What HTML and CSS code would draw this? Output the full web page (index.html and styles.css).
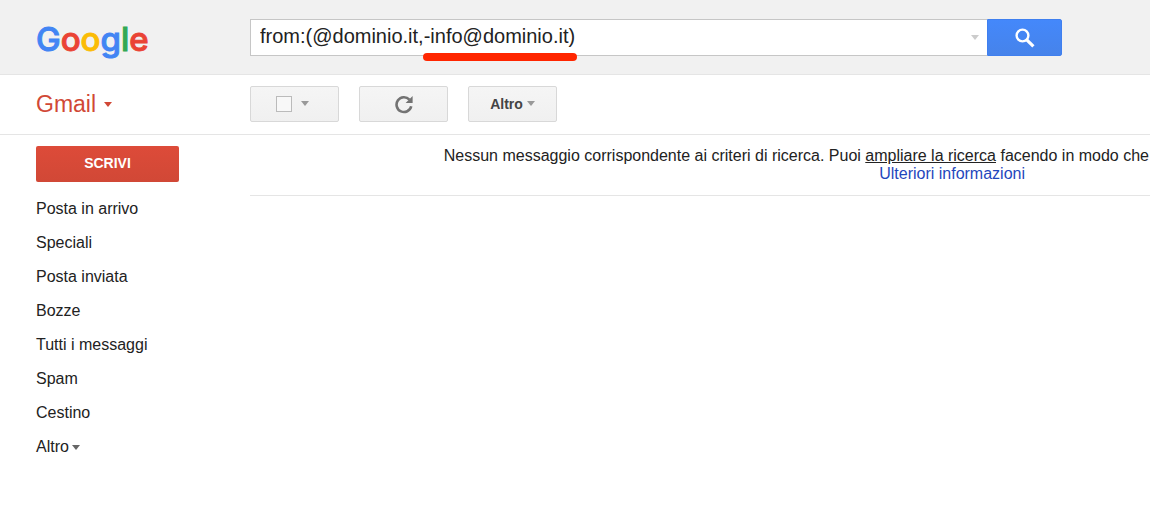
FILE: index.html
```html
<!DOCTYPE html>
<html lang="it">
<head>
    <meta charset="UTF-8">
    <meta name="viewport" content="width=device-width, initial-scale=1.0">
    <title>Gmail</title>
    <link rel="stylesheet" href="styles.css">
</head>
<body>
    <header class="top-bar">
        <a class="logo" href="#" aria-label="Google"><span class="blue">G</span><span class="red">o</span><span class="yellow">o</span><span class="blue">g</span><span class="green">l</span><span class="red">e</span></a>
        <form class="search" role="search">
            <div class="search-box">
                <input class="search-input" type="text" aria-label="Cerca" value="from:(@dominio.it,-info@dominio.it)" spellcheck="false" autocomplete="off">
                <button class="search-options" type="button" aria-label="Mostra opzioni di ricerca"><span class="caret light"></span></button>
                <span class="marker"></span>
            </div>
            <button class="search-btn" type="submit" aria-label="Cerca">
                <svg width="20" height="20" viewBox="0 0 20 20" fill="none" stroke="#fff">
                    <circle cx="7.5" cy="7.5" r="5.9" stroke-width="2.4"/>
                    <path d="M11.8 11.8L18.4 18.4" stroke-width="3.2"/>
                </svg>
            </button>
        </form>
    </header>

    <div class="toolbar">
        <button class="gmail-menu" type="button">Gmail <span class="caret red-caret"></span></button>
        <div class="tools">
            <div class="tool-btn select-btn">
                <input class="select-all" type="checkbox" aria-label="Seleziona">
                <span class="caret"></span>
            </div>
            <button class="tool-btn" type="button" aria-label="Aggiorna">
                <svg class="refresh" width="20" height="20" viewBox="0 0 20 20">
                    <path d="M15.4 5.6A7.4 7.4 0 1 0 17.2 12.2" fill="none" stroke="#737373" stroke-width="2.6"/>
                    <path d="M18.6 2V9H11.6Z" fill="#737373"/>
                </svg>
            </button>
            <button class="tool-btn" type="button">Altro <span class="caret"></span></button>
        </div>
    </div>

    <div class="content">
        <aside class="sidebar">
            <button class="compose-btn" type="button">SCRIVI</button>
            <nav class="folders">
                <a href="#">Posta in arrivo</a>
                <a href="#">Speciali</a>
                <a href="#">Posta inviata</a>
                <a href="#">Bozze</a>
                <a href="#">Tutti i messaggi</a>
                <a href="#">Spam</a>
                <a href="#">Cestino</a>
                <a href="#">Altro<span class="caret dark"></span></a>
            </nav>
        </aside>
        <main class="results">
            <p class="message">Nessun messaggio corrispondente ai criteri di ricerca. Puoi <a class="widen" href="#">ampliare la ricerca</a> facendo in modo che</p>
            <p class="message more"><a href="#">Ulteriori informazioni</a></p>
        </main>
    </div>
</body>
</html>
```

FILE: styles.css
```css
* {
    box-sizing: border-box;
}
body {
    margin: 0;
    background-color: white;
    color: #222;
    font-family: "Liberation Sans", Arial, sans-serif;
    font-size: 16px;
    line-height: 18px;
}
button {
    font-family: inherit;
    cursor: pointer;
}
a {
    color: inherit;
    text-decoration: none;
}

/* small drop-down arrow */
.caret {
    display: inline-block;
    border: 4px solid transparent;
    border-top: 5px solid #999;
    border-bottom: 0;
}
.caret.light {
    border-top-color: #ccc;
}
.caret.dark {
    border-top-color: #666;
    margin-left: 3px;
    vertical-align: 2px;
}
.caret.red-caret {
    border-top-color: #d14836;
}

/* header */
.top-bar {
    display: flex;
    align-items: center;
    height: 75px;
    padding: 0 88px 0 36px;
    background-color: #f1f1f1;
    border-bottom: 1px solid #e5e5e5;
}
.logo {
    flex: 0 0 214px;
    padding-top: 4px;
    font-family: Inter, Roboto, sans-serif;
    font-size: 33px;
    font-weight: 500;
    line-height: 40px;
    -webkit-text-stroke: 1px currentColor;
}
.blue {
    color: #4285f4;
}
.red {
    color: #ea4335;
}
.yellow {
    color: #fbbc05;
}
.green {
    color: #34a853;
}
.search {
    display: flex;
    flex: 1;
    height: 37px;
}
.search-box {
    position: relative;
    display: flex;
    flex: 1;
    background-color: white;
    border: 1px solid #c6c6c6;
    border-right: 0;
}
.search-input {
    flex: 1;
    min-width: 0;
    padding: 0 0 2px 9px;
    border: none;
    outline: none;
    background: none;
    color: #222;
    font-family: inherit;
    font-size: 20px;
}
.search-options {
    display: flex;
    align-items: center;
    padding: 0 8px;
    border: none;
    background: none;
}
.marker {
    position: absolute;
    left: 172px;
    top: 33px;
    width: 154px;
    height: 8px;
    border-radius: 4px;
    background-color: #ff2600;
}
.search-btn {
    display: flex;
    align-items: center;
    justify-content: center;
    width: 75px;
    padding: 2px 0 0;
    border: 1px solid #3f7fef;
    border-radius: 0 2px 2px 0;
    background: linear-gradient(#4488fb, #4683ea);
}

/* toolbar */
.toolbar {
    display: flex;
    align-items: center;
    height: 60px;
    padding: 0 36px;
    border-bottom: 1px solid #e5e5e5;
}
.gmail-menu {
    display: flex;
    flex: 0 0 214px;
    align-items: center;
    gap: 8px;
    padding: 0;
    border: none;
    background: none;
    color: #d14836;
    font-size: 23px;
}
.tools {
    display: flex;
    gap: 20px;
    padding-bottom: 2px;
}
.tool-btn {
    display: flex;
    align-items: center;
    justify-content: center;
    gap: 4px;
    width: 89px;
    height: 36px;
    padding: 0;
    border: 1px solid #d8d8d8;
    border-radius: 2px;
    background: linear-gradient(#f5f5f5, #f0f0f0);
    color: #444;
    font-size: 14px;
    font-weight: bold;
}
.select-btn {
    gap: 9px;
    padding-right: 4px;
}
.select-all {
    appearance: none;
    width: 16px;
    height: 16px;
    margin: 0;
    border: 1px solid #bbb;
    background-color: #f8f8f8;
}

/* sidebar and results */
.content {
    display: flex;
    padding-top: 11px;
}
.sidebar {
    flex: 0 0 250px;
    padding-left: 36px;
}
.compose-btn {
    width: 143px;
    height: 36px;
    margin-bottom: 18px;
    padding: 0 0 2px;
    border: none;
    border-radius: 2px;
    background: linear-gradient(#dd4b39, #d14836);
    color: white;
    font-size: 14px;
    font-weight: bold;
}
.folders {
    display: flex;
    flex-direction: column;
    gap: 16px;
}
.results {
    flex: 1;
    align-self: flex-start;
    min-width: 0;
    padding: 1px 0 12px;
    border-bottom: 1px solid #e5e5e5;
}
.message {
    margin: 0;
    padding-right: 1px;
    text-align: right;
}
.more {
    padding-right: 125px;
    color: #1f47bd;
}
.widen {
    text-decoration: underline;
}
```
